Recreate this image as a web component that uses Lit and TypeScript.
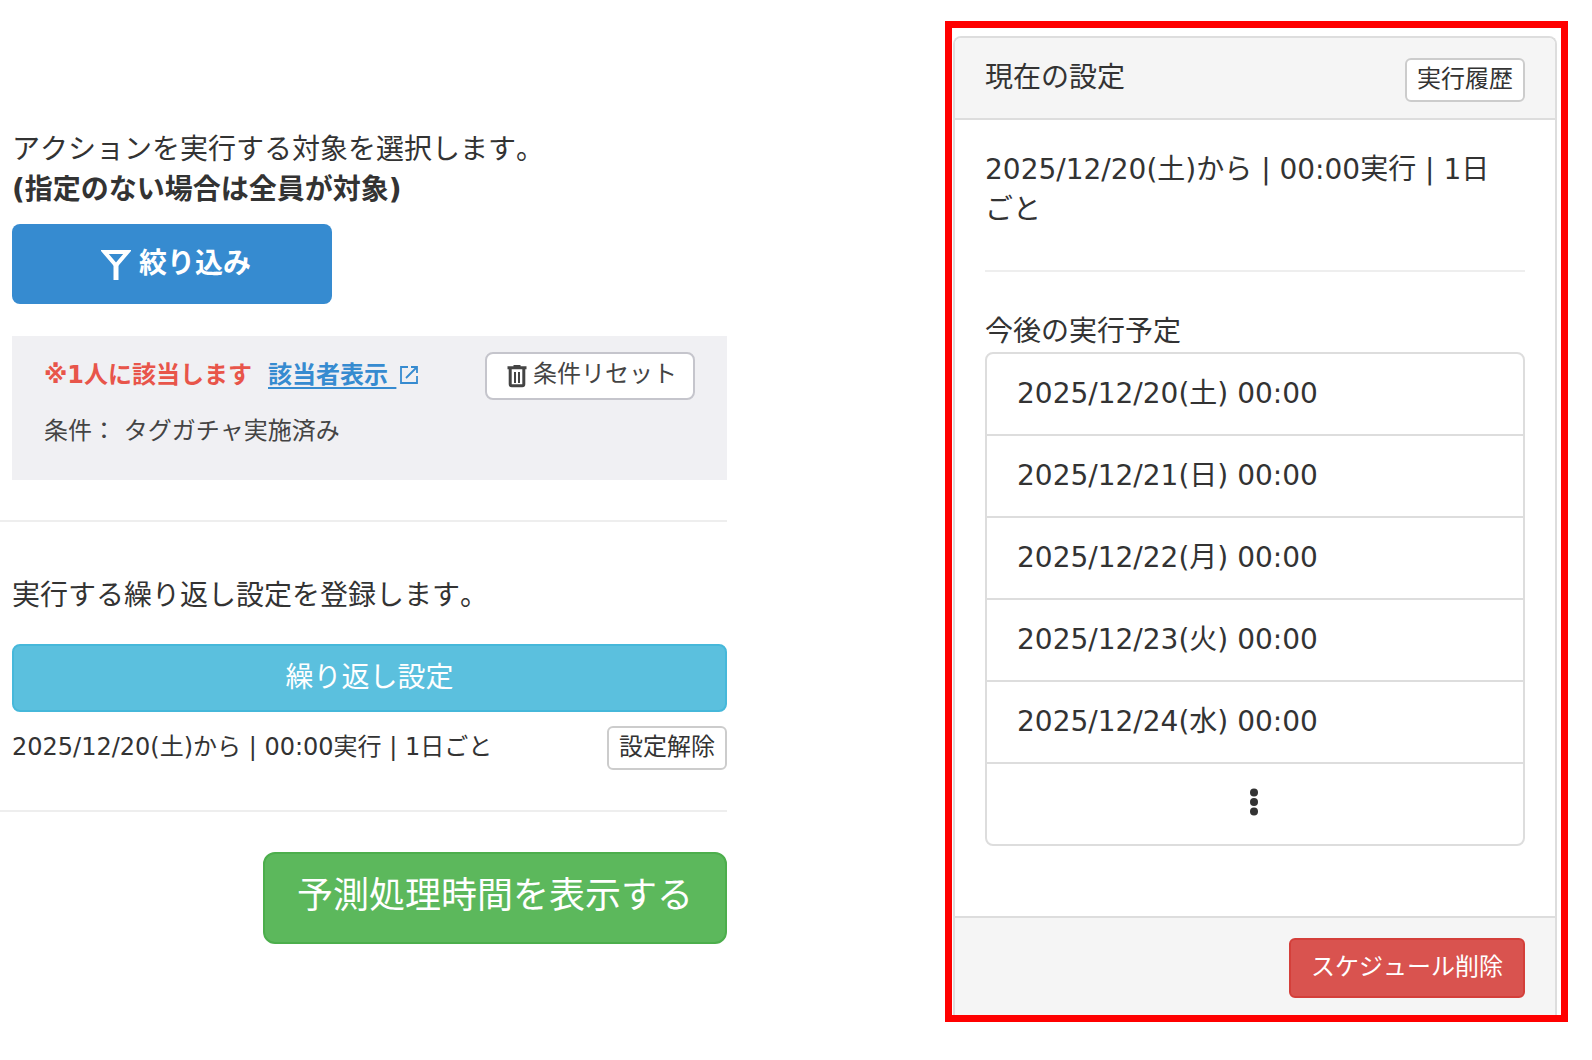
import { LitElement, html, css, svg } from "lit";
import { customElement, property } from "lit/decorators.js";

const filterIcon = svg`
  <svg class="icon" width="30" height="32" viewBox="0 0 30 32" aria-hidden="true">
    <path d="M3.5 4H26.5L15 17.5Z" fill="none" stroke="currentColor" stroke-width="4"/>
    <path d="M15 16V32" fill="none" stroke="currentColor" stroke-width="5"/>
  </svg>`;

const externalIcon = svg`
  <svg class="icon" width="18" height="18" viewBox="0 0 18 18" aria-hidden="true">
    <path d="M8 1H1V17H17V10M11 1H17V7M17 1L6 12" fill="none" stroke="currentColor" stroke-width="1.8"/>
  </svg>`;

const trashIcon = svg`
  <svg class="icon" width="20" height="24" viewBox="0 0 20 24" aria-hidden="true">
    <path d="M6.5 2.2V1H13.5V2.2H19.5V5.2H.5V2.2Z" fill="currentColor"/>
    <path d="M3.2 5V20.3Q3.2 21.8 4.7 21.8H15.3Q16.8 21.8 16.8 20.3V5" fill="none" stroke="currentColor" stroke-width="3"/>
    <path d="M8 8V19M12 8V19" fill="none" stroke="currentColor" stroke-width="2"/>
  </svg>`;

const moreIcon = svg`
  <svg class="icon" width="8" height="28" viewBox="0 0 8 28" aria-hidden="true" fill="currentColor">
    <circle cx="4" cy="4.5" r="4"/><circle cx="4" cy="14" r="4"/><circle cx="4" cy="23.5" r="4"/>
  </svg>`;

const shared = css`
  * { box-sizing: border-box; }
  p, h2, h3, ul { margin: 0; padding: 0; font-size: inherit; font-weight: 400; }
  ul { list-style: none; }
  button { font: inherit; font-kerning: none; color: inherit; cursor: pointer; margin: 0; white-space: nowrap; }
  .icon { flex: none; display: block; }
  .rule { border: 0; border-top: 2px solid #eee; margin: 40px 0; }
  .small {
    height: 44px; padding: 0 10px 2px; flex: none;
    font-size: 24px; line-height: 36px;
    color: #333; background: #fff; border: 2px solid #ccc; border-radius: 6px;
  }
`;

@customElement("action-form")
class ActionForm extends LitElement {
  static styles = [shared, css`
    :host { display: block; padding-top: 130px; }
    .section { padding-left: 12px; }
    .filter {
      display: flex; align-items: center; justify-content: center; gap: 8px;
      width: 320px; max-width: 100%; height: 80px; margin-top: 14px; padding: 0 0 0 8px;
      border: 0; border-radius: 8px; background: #368bd0; color: #fff; font-weight: 700;
    }
    .result {
      margin-top: 32px; padding: 16px 32px 32px; background: #f0f0f3;
      font-size: 24px; line-height: 34px; color: #444;
    }
    .summary { display: flex; align-items: flex-start; justify-content: space-between; margin-bottom: 14px; }
    .matches { display: flex; gap: 16px; padding-top: 6px; font-weight: 700; }
    .count { color: #e8554a; }
    .people { display: flex; align-items: center; gap: 4px; color: #368bd0; text-decoration: none; }
    .label { white-space: pre; text-decoration: underline; text-decoration-thickness: 2px; text-underline-offset: 4px; }
    .reset {
      display: flex; align-items: center; gap: 6px; height: 48px; padding: 0 16px 0 20px;
      background: #fff; border: 2px solid #c5c5cc; border-radius: 8px;
    }
    .reset-text { padding-bottom: 4px; }
    .lead { padding-top: 14px; margin-bottom: 28px; }
    .repeat {
      display: block; width: 100%; height: 68px; padding: 0;
      color: #fff; background: #5bc0de; border: 2px solid #46b8da; border-radius: 8px;
    }
    .current { display: flex; justify-content: space-between; margin-top: 14px; font-size: 24px; line-height: 42px; }
    .submit { display: flex; justify-content: flex-end; }
    .estimate {
      height: 92px; padding: 0 32px 4px; font-size: 36px;
      color: #fff; background: #5cb85c; border: 2px solid #4cae4c; border-radius: 12px;
    }
  `];

  @property() schedule = "";

  render() {
    return html`
      <section class="section">
        <p>アクションを実行する対象を選択します。</p>
        <p><strong>(指定のない場合は全員が対象)</strong></p>
        <button class="filter" type="button">${filterIcon}<span>絞り込み</span></button>
        <div class="result">
          <div class="summary">
            <div class="matches">
              <span class="count">※1人に該当します</span>
              <a class="people" href="#people"><span class="label">該当者表示 </span>${externalIcon}</a>
            </div>
            <button class="reset" type="button">${trashIcon}<span class="reset-text">条件リセット</span></button>
          </div>
          <p>条件： タグガチャ実施済み</p>
        </div>
      </section>
      <hr class="rule">
      <section class="section">
        <p class="lead">実行する繰り返し設定を登録します。</p>
        <button class="repeat" type="button">繰り返し設定</button>
        <div class="current">
          <span>${this.schedule}ごと</span>
          <button class="small" type="button">設定解除</button>
        </div>
      </section>
      <hr class="rule">
      <div class="submit"><button class="estimate" type="button">予測処理時間を表示する</button></div>
    `;
  }
}

@customElement("schedule-panel")
class SchedulePanel extends LitElement {
  static styles = [shared, css`
    :host { display: block; padding: 8px 4px 0 1px; border: 7px solid #f00; }
    .panel { border: 2px solid #ddd; border-bottom: 0; border-radius: 8px 8px 0 0; overflow: hidden; }
    .head {
      display: flex; justify-content: space-between; align-items: flex-start;
      padding: 20px 30px 16px; background: #f5f5f5; border-bottom: 2px solid #ddd;
    }
    .body { padding: 30px 30px 70px; }
    .keep { white-space: nowrap; }
    .list { border: 2px solid #ddd; border-radius: 8px; }
    .item { display: flex; align-items: center; height: 82px; padding: 0 30px; border-bottom: 2px solid #ddd; }
    .item:last-child { height: 80px; padding: 0 32px 4px 30px; border-bottom: 0; justify-content: center; }
    .foot {
      display: flex; justify-content: flex-end;
      padding: 20px 30px 17px; background: #f5f5f5; border-top: 2px solid #ddd;
    }
    .delete {
      height: 60px; padding: 0 20px 2px; font-size: 24px;
      color: #fff; background: #d9534f; border: 2px solid #d43f3a; border-radius: 6px;
    }
  `];

  @property() schedule = "";
  @property({ attribute: false }) runs: string[] = [];

  render() {
    return html`
      <div class="panel">
        <header class="head">
          <h2>現在の設定</h2>
          <button class="small" type="button">実行履歴</button>
        </header>
        <div class="body">
          <p>${this.schedule}<span class="keep">ごと</span></p>
          <hr class="rule">
          <h3>今後の実行予定</h3>
          <ul class="list">
            ${this.runs.map((run) => html`<li class="item">${run}</li>`)}
            <li class="item">${moreIcon}</li>
          </ul>
        </div>
        <footer class="foot"><button class="delete" type="button">スケジュール削除</button></footer>
      </div>
    `;
  }
}

@customElement("app-root")
class AppRoot extends LitElement {
  static styles = css`
    :host {
      display: grid; grid-template-columns: minmax(0, 727fr) minmax(0, 623fr); column-gap: 218px;
      align-items: start; padding: 0 24px 38px 0; background: #fff; color: #333;
      font-family: "DejaVu Sans", "Noto Sans CJK JP", sans-serif;
      font-size: 28px; line-height: 40px; font-kerning: none;
    }
    .aside { margin-top: 21px; }
  `;

  schedule = "2025/12/20(土)から | 00:00実行 | 1日";
  runs = [
    "2025/12/20(土) 00:00",
    "2025/12/21(日) 00:00",
    "2025/12/22(月) 00:00",
    "2025/12/23(火) 00:00",
    "2025/12/24(水) 00:00",
  ];

  render() {
    return html`
      <action-form .schedule=${this.schedule}></action-form>
      <schedule-panel class="aside" .schedule=${this.schedule} .runs=${this.runs}></schedule-panel>
    `;
  }
}
